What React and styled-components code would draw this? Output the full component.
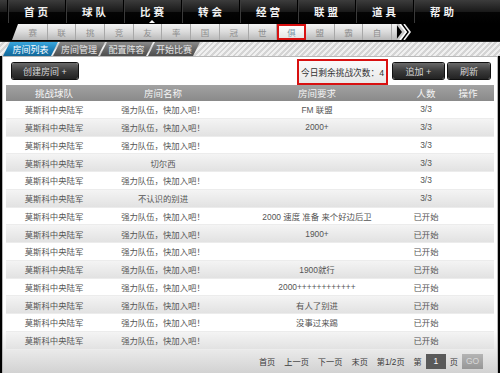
import React from "react";
import { styled, createGlobalStyle } from "styled-components";

const GlobalStyle = createGlobalStyle`
  html, body {
    margin: 0;
    padding: 0;
    background: #000;
  }
  body {
    font-family: "Liberation Sans", "Noto Sans CJK SC", sans-serif;
    width: 500px;
    height: 373px;
    overflow: hidden;
  }
`;

const Page = styled.div`
  width: 500px;
  height: 373px;
  display: flex;
  flex-direction: column;
`;

const TopNav = styled.div`
  height: 23px;
  display: flex;
  padding-left: 8px;
  background: linear-gradient(#3c3c3c, #1a1a1a 50%, #050505 51%, #000);
  position: relative;
`;

const NavItem = styled.div`
  width: 57px;
  display: flex;
  align-items: center;
  justify-content: center;
  color: #f2f2f2;
  font-size: 10.5px;
  font-weight: bold;
  letter-spacing: 3px;
  border-left: 1px solid #3a3a3a;
  box-shadow: -1px 0 0 #000;
  position: relative;
`;

const Pointer = styled.span`
  position: absolute;
  bottom: 0;
  left: 50%;
  margin-left: -5px;
  width: 0;
  height: 0;
  border-left: 3px solid transparent;
  border-right: 3px solid transparent;
  border-bottom: 3px solid #fff;
`;

const SubNav = styled.div`
  height: 18px;
  background: #000;
  display: flex;
  align-items: center;
  padding-left: 12px;
`;

const SubBar = styled.div`
  height: 16px;
  display: flex;
  padding-left: 7px;
  background: linear-gradient(#f4f4f4, #dadada 50%, #b8b8b8);
  clip-path: polygon(6px 0, 100% 0, 100% 100%, 0 100%);
`;

const SubItem = styled.div`
  width: 28.7px;
  box-sizing: border-box;
  display: flex;
  align-items: center;
  justify-content: center;
  font-size: 8.5px;
  color: ${(p) => (p.$active ? "#7d97a8" : "#8e8e8e")};
  border-right: 1px solid #a8a8a8;
  ${(p) =>
    p.$active &&
    `
    border: 2px solid #d81010;
    background: linear-gradient(#ffffff, #e4e4e4);
  `}
`;

const Chevron = styled.svg`
  display: block;
  margin-left: -1px;
`;

const TabRow = styled.div`
  height: 15px;
  display: flex;
  padding-left: 3px;
  background: repeating-linear-gradient(135deg, #f0f0f0 0 2px, #d4d4d4 2px 4px);
  border-top: 1px solid #222;
  box-sizing: border-box;
`;

const Tab = styled.div`
  width: ${(p) => p.$w}px;
  height: 14px;
  display: flex;
  align-items: center;
  justify-content: center;
  margin-right: -5px;
  font-size: 9px;
  color: ${(p) => (p.$active ? "#fff" : "#e6e6e6")};
  background: ${(p) =>
    p.$active
      ? "linear-gradient(#3aa6dc, #1b7fb8 55%, #146898)"
      : "linear-gradient(#8a8a8a, #666 55%, #4e4e4e)"};
  clip-path: polygon(7px 0, 100% 0, calc(100% - 7px) 100%, 0 100%);
`;

const Panel = styled.div`
  flex: 1;
  margin: 0 2px;
  border: 1px solid #b8b8b8;
  border-bottom: none;
  padding: 0 3px;
  display: flex;
  flex-direction: column;
  background: linear-gradient(#fff 86%, #d2d2d2);
`;

const Toolbar = styled.div`
  height: 28px;
  display: flex;
  align-items: center;
  padding: 0 4px 0 6px;
`;

const DarkButton = styled.div`
  width: ${(p) => p.$w}px;
  height: 16px;
  margin-left: ${(p) => p.$ml || 0}px;
  display: flex;
  align-items: center;
  justify-content: center;
  border-radius: 2px;
  font-size: 9px;
  color: #d8d8d8;
  background: linear-gradient(#6a6a6a, #3a3a3a 50%, #222);
  box-shadow: 0 0 0 1px #111;
`;

const Spacer = styled.div`
  flex: 1;
`;

const ChallengeBox = styled.div`
  width: 91px;
  height: 26px;
  box-sizing: border-box;
  border: 2px solid #d81010;
  display: flex;
  align-items: center;
  justify-content: center;
  font-size: 8.7px;
  color: #333;
  background: linear-gradient(#fafafa, #e8e8e8);
  align-self: flex-end;
`;

const Grid = styled.div`
  display: grid;
  grid-template-columns: 96px 122px 186px 32px 52px;
  align-items: center;
  text-align: center;
  white-space: nowrap;
`;

const HeadRow = styled(Grid)`
  height: 16px;
  background: linear-gradient(#a2a2a2, #8a8a8a);
  color: #f4f4f4;
  font-size: 9.5px;
`;

const Row = styled(Grid)`
  height: 17.75px;
  font-size: 8.4px;
  color: #555;
  box-sizing: border-box;
  border-bottom: 1px solid #ececec;
  background: ${(p) =>
    p.$odd ? "linear-gradient(#f4f4f4, #e2e2e2)" : "#fff"};
`;

const Footer = styled.div`
  flex: 1;
  display: flex;
  align-items: center;
  justify-content: flex-end;
  gap: 9px;
  padding-right: 11px;
  font-size: 8.2px;
  color: #3a3a3a;
`;

const PageInput = styled.div`
  width: 20px;
  height: 15px;
  margin: 0 -5px;
  display: flex;
  align-items: center;
  justify-content: center;
  background: #5a5a5a;
  color: #fff;
  font-size: 8.5px;
`;

const GoButton = styled.div`
  width: 21px;
  height: 15px;
  margin-left: -5px;
  display: flex;
  align-items: center;
  justify-content: center;
  background: linear-gradient(#b4b4b4, #969696);
  color: #d8d8d8;
  font-size: 8.5px;
`;

const navItems = ["首页", "球队", "比赛", "转会", "经营", "联盟", "道具", "帮助"];
const subItems = ["赛", "联", "挑", "竞", "友", "率", "国", "冠", "世", "俱", "盟", "霸", "自"];
const tabs = [
  { label: "房间列表", w: 55, active: true },
  { label: "房间管理", w: 52 },
  { label: "配置阵容", w: 53 },
  { label: "开始比赛", w: 52 },
];

const team = "莫斯科中央陆军";
const strong = "强力队伍，快加入吧！";
const rows = [
  [strong, "FM 联盟", "3/3"],
  [strong, "2000+", "3/3"],
  [strong, "", "3/3"],
  ["切尔西", "", "3/3"],
  [strong, "", "3/3"],
  ["不认识的别进", "", "3/3"],
  [strong, "2000 速度 准备 来个好边后卫", "已开始"],
  [strong, "1900+", "已开始"],
  [strong, "", "已开始"],
  [strong, "1900就行", "已开始"],
  [strong, "2000++++++++++++", "已开始"],
  [strong, "有人了别进", "已开始"],
  [strong, "没事过来踢", "已开始"],
  [strong, "", "已开始"],
];

const App = () => {
  return (
    <>
      <GlobalStyle />
      <Page>
        <TopNav>
          {navItems.map((n) => (
            <NavItem key={n}>
              {n}
              {n === "比赛" && <Pointer />}
            </NavItem>
          ))}
        </TopNav>
        <SubNav>
          <SubBar>
            {subItems.map((s) => (
              <SubItem key={s} $active={s === "俱"}>
                {s}
              </SubItem>
            ))}
            <div style={{ width: 5 }} />
          </SubBar>
          <Chevron width="16" height="16" viewBox="0 0 16 16">
            <polygon points="0,0 5,0 11,8 5,16 0,16 6,8" fill="#c8c8c8" />
            <polyline points="4,0 10,8 4,16" fill="none" stroke="#fff" strokeWidth="1.6" />
            <polyline points="8,0 14,8 8,16" fill="none" stroke="#f0f0f0" strokeWidth="1.6" />
          </Chevron>
        </SubNav>
        <TabRow>
          {tabs.map((t) => (
            <Tab key={t.label} $w={t.w} $active={t.active}>
              {t.label}
            </Tab>
          ))}
        </TabRow>
        <Panel>
          <Toolbar>
            <DarkButton $w={66}>创建房间 +</DarkButton>
            <Spacer />
            <ChallengeBox>今日剩余挑战次数：4</ChallengeBox>
            <DarkButton $w={51} $ml={5}>追加 +</DarkButton>
            <DarkButton $w={42} $ml={4}>刷新</DarkButton>
          </Toolbar>
          <HeadRow>
            <span>挑战球队</span>
            <span>房间名称</span>
            <span>房间要求</span>
            <span>人数</span>
            <span>操作</span>
          </HeadRow>
          {rows.map((r, i) => (
            <Row key={i} $odd={i % 2 === 1}>
              <span>{team}</span>
              <span>{r[0]}</span>
              <span>{r[1]}</span>
              <span>{r[2]}</span>
              <span></span>
            </Row>
          ))}
          <Footer>
            <span>首页</span>
            <span>上一页</span>
            <span>下一页</span>
            <span>末页</span>
            <span>第1/2页</span>
            <span>第</span>
            <PageInput>1</PageInput>
            <span>页</span>
            <GoButton>GO</GoButton>
          </Footer>
        </Panel>
      </Page>
    </>
  );
};

export default App;
